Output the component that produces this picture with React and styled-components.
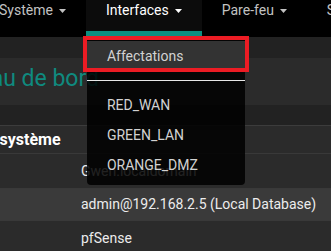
import React from "react";
import styled, { createGlobalStyle } from "styled-components";

const GlobalStyle = createGlobalStyle`
  html, body { margin: 0; padding: 0; background: #222222; }
  body {
    font-family: Roboto, "Liberation Sans", sans-serif;
    width: 331px;
    height: 251px;
    overflow: hidden;
  }
`;

const Page = styled.div`
  position: relative;
  width: 331px;
  height: 251px;
  overflow: hidden;
  background: #222222;
`;

const Navbar = styled.nav`
  position: relative;
  z-index: 10;
  display: flex;
  height: 37px;
  margin-left: -21px;
  background: #000000;
`;

const NavItem = styled.div`
  position: relative;
  display: flex;
  align-items: flex-start;
  flex: none;
  height: 31px;
  padding: 0 20px;
  line-height: 20px;
  font-size: 14px;
  white-space: nowrap;
  color: ${(p) => (p.$active ? "#ffffff" : "#c2c2c2")};
  background: ${(p) => (p.$active ? "#0c0c0c" : "transparent")};
  border-bottom: ${(p) => (p.$active ? "5px solid #0b8f81" : "0")};
`;

const CaretSvg = styled.svg`
  flex: none;
  margin: 9px 0 0 6px;
  width: 7px;
  height: 4px;
`;

const Caret = () => (
  <CaretSvg viewBox="0 0 7 4">
    <polygon points="0,0 7,0 3.5,4" fill="currentColor" />
  </CaretSvg>
);

const Dropdown = styled.div`
  position: absolute;
  top: 36px;
  left: 1px;
  width: 158px;
  padding: 5px 0;
  background: rgba(0, 0, 0, 0.86);
  border-radius: 0 0 4px 4px;
  z-index: 20;
`;

const DropItem = styled.div`
  position: relative;
  padding: 5px 20px;
  line-height: 20px;
  font-size: 14px;
  color: #d2d2d2;
  background: ${(p) => (p.$highlight ? "#333333" : "transparent")};
`;

const Annotation = styled.span`
  position: absolute;
  top: -5px;
  bottom: -1px;
  left: -4px;
  right: -4px;
  border: 4px solid #ec1c24;
  pointer-events: none;
`;

const Divider = styled.div`
  height: 1px;
  margin: 9px 0;
  background: #e8e8e8;
`;

const Main = styled.main`
  padding-top: 21px;
`;

const PageHeader = styled.header`
  box-sizing: border-box;
  height: 47px;
  padding-top: 8px;
  background: #2b2b2b;
  overflow: hidden;
`;

const Title = styled.h1`
  margin: 0 0 0 -65px;
  font-size: 23px;
  font-weight: 400;
  line-height: 25px;
  white-space: nowrap;
  color: #0f8a7f;
`;

const Panel = styled.section`
  margin: 20px 0 0 -120px;
  background: #2b2b2b;
  border-top: 1px solid #3c3c3c;
`;

const PanelHeading = styled.h2`
  box-sizing: border-box;
  display: flex;
  align-items: center;
  height: 27px;
  margin: 0;
  padding-left: 23px;
  font-size: 16px;
  font-weight: 700;
  white-space: nowrap;
  color: #ffffff;
`;

const Row = styled.div`
  display: grid;
  grid-template-columns: 193px 1fr;
  padding: ${(p) => p.$pad};
  border-top: 1px solid #393939;
  background: ${(p) => (p.$striped ? "#3a3a3a" : "#2b2b2b")};
  font-size: 14px;
  line-height: 20px;
  color: #ececec;
`;

const Cell = styled.div`
  padding: 0 8px;
  white-space: nowrap;
`;

const Label = styled(Cell)`
  font-weight: 700;
`;

export default function App() {
  return (
    <Page>
      <GlobalStyle />
      <Navbar>
        <NavItem>
          Système
          <Caret />
        </NavItem>
        <NavItem $active>
          Interfaces
          <Caret />
          <Dropdown>
            <DropItem $highlight>
              Affectations
              <Annotation />
            </DropItem>
            <Divider />
            <DropItem>RED_WAN</DropItem>
            <DropItem>GREEN_LAN</DropItem>
            <DropItem>ORANGE_DMZ</DropItem>
          </Dropdown>
        </NavItem>
        <NavItem>
          Pare-feu
          <Caret />
        </NavItem>
        <NavItem>
          Services
          <Caret />
        </NavItem>
      </Navbar>
      <Main>
        <PageHeader>
          <Title>Tableau de bord</Title>
        </PageHeader>
        <Panel>
          <PanelHeading>Informations système</PanelHeading>
          <Row $pad="7px 0">
            <Label>Nom</Label>
            <Cell>Gwen.localdomain</Cell>
          </Row>
          <Row $pad="5px 0 6px" $striped>
            <Label>Utilisateur</Label>
            <Cell>admin@192.168.2.5 (Local Database)</Cell>
          </Row>
          <Row $pad="7px 0">
            <Label>Système</Label>
            <Cell>
              pfSense
              <br />
              2.4.4-RELEASE (amd64)
            </Cell>
          </Row>
        </Panel>
      </Main>
    </Page>
  );
}
